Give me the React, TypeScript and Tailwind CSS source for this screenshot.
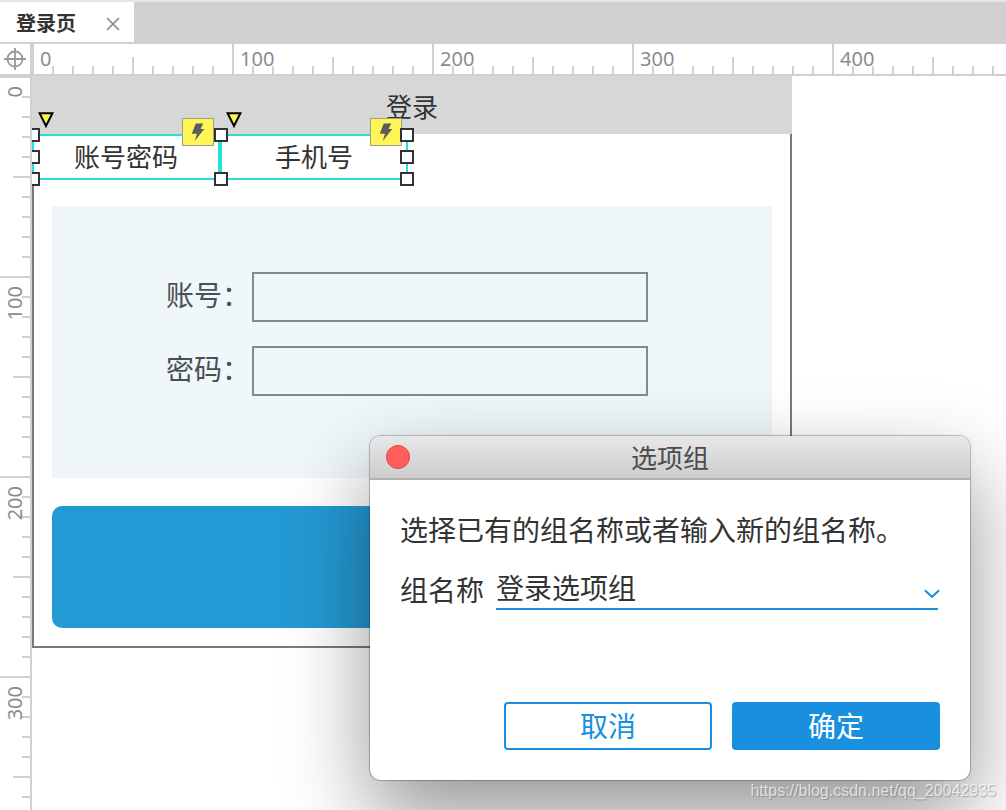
import { useState } from "react";

const columnMarks = [0, 100, 200, 300, 400];
const rowMarks = [0, 100, 200, 300];
const steps = [1, 2, 3, 4, 5, 6, 7, 8, 9];

function HorizontalRuler() {
  return (
    <div className="flex h-8 min-w-0 flex-1 overflow-hidden border-b-2 border-[#d0d0d0] bg-white">
      {columnMarks.map((mark) => (
        <div key={mark} className="relative w-[200px] shrink-0 pt-0.5 pl-2 text-xl leading-[26px] text-[#8c8c8c]">
          <svg className="absolute inset-0 h-[30px] w-[200px]" viewBox="0 0 200 30" fill="#d0d0d0" aria-hidden="true">
            <rect x="0" y="0" width="2" height="30" />
            {steps.map((s) => (
              <rect key={s} x={s * 20} y={s === 5 ? 13 : 22} width="2" height={s === 5 ? 17 : 8} />
            ))}
          </svg>
          <span className="relative">{mark}</span>
        </div>
      ))}
    </div>
  );
}

function VerticalRuler() {
  return (
    <div className="relative w-8 shrink-0 overflow-hidden border-r-2 border-[#d0d0d0] bg-white">
      <div className="absolute inset-x-0 top-0">
        {rowMarks.map((mark) => (
          <div key={mark} className="relative flex h-[200px] items-start pt-2.5 text-xl leading-[26px] text-[#8c8c8c]">
            <svg className="absolute inset-0 h-[200px] w-[30px]" viewBox="0 0 30 200" fill="#d0d0d0" aria-hidden="true">
              <rect x="0" y="0" width="30" height="2" />
              {steps.map((s) => (
                <rect key={s} x={s === 5 ? 13 : 22} y={s * 20} width={s === 5 ? 17 : 8} height="2" />
              ))}
            </svg>
            <span className="relative ml-0.5 rotate-180 [writing-mode:vertical-rl]">{mark}</span>
          </div>
        ))}
      </div>
    </div>
  );
}

function Handle({ place }: { place: string }) {
  return <span className={`absolute z-10 size-3.5 border-2 border-[#333] bg-white ${place}`} />;
}

function OptionTab({ label, first }: { label: string; first?: boolean }) {
  return (
    <div className="relative flex h-[46px] w-[188px] items-center justify-center border-2 border-[#26e0dc] bg-white text-[26px] text-[#333]">
      {label}
      <svg className="absolute -top-6 left-1 h-[18px] w-[18px]" viewBox="0 0 18 18" aria-hidden="true">
        <path d="M1.6 1.3H14.4L8 14Z" fill="#fff34f" stroke="#000" strokeWidth="2" />
      </svg>
      <span className="absolute -top-[18px] right-1 flex h-7 w-8 items-center justify-center border border-[#a09f83] bg-[#fff556]">
        <svg className="h-5 w-3.5" viewBox="0 0 14 20" aria-hidden="true">
          <path d="M4.7 1.5H12.3L9.5 7H13.3L3.7 19L6 11.8H0.8Z" fill="#5c5c5c" />
        </svg>
      </span>
      {first && (
        <>
          <Handle place="-top-2 -left-2" />
          <Handle place="top-3.5 -left-2" />
          <Handle place="-bottom-2 -left-2" />
        </>
      )}
      {!first && <Handle place="top-3.5 -right-2" />}
      <Handle place={first ? "-top-2 -right-2.5" : "-top-2 -right-2"} />
      <Handle place={first ? "-bottom-2 -right-2.5" : "-bottom-2 -right-2"} />
    </div>
  );
}

function Field({ id, label, type }: { id: string; label: string; type: string }) {
  return (
    <div className="flex items-start">
      <label htmlFor={id} className="w-[86px] text-[28px] leading-[46px] text-[#485154]">
        {label}
      </label>
      <input id={id} type={type} className="h-[50px] w-[396px] border-2 border-[#828a8d] bg-transparent px-3 text-2xl outline-none" />
    </div>
  );
}

function GroupDialog() {
  const [name, setName] = useState("登录选项组");
  return (
    <section
      role="dialog"
      aria-labelledby="dialog-title"
      className="absolute top-[436px] left-[370px] z-20 w-[600px] overflow-hidden rounded-[11px] bg-white text-[28px] text-[#333] shadow-[0_0_1px_1px_rgba(0,0,0,0.25),0_36px_84px_rgba(0,0,0,0.42)]"
    >
      <header className="relative flex h-11 items-center justify-center border-b-2 border-[#b1b1b1] bg-linear-to-b from-[#e8e8e8] to-[#cdcdcd]">
        <button type="button" aria-label="关闭" className="absolute left-4 size-6 rounded-full border border-[#e2463f] bg-[#ff5f5a]" />
        <h1 id="dialog-title" className="pt-0.5 text-[26px] leading-10 text-[#4b4b4b]">选项组</h1>
      </header>
      <div className="p-[30px]">
        <p className="leading-10">选择已有的组名称或者输入新的组名称。</p>
        <div className="mt-4 flex items-end gap-3">
          <label htmlFor="group-name" className="shrink-0 leading-10">组名称</label>
          <div className="relative mr-0.5 flex h-11 min-w-0 flex-1 items-end border-b-2 border-[#1890df]">
            <input
              id="group-name"
              value={name}
              onChange={(e) => setName(e.target.value)}
              className="h-10 min-w-0 flex-1 bg-transparent leading-10 outline-none"
            />
            <button type="button" aria-label="展开" className="-mr-0.5 flex h-7 w-5 items-center justify-end">
              <svg className="h-3 w-4" viewBox="0 0 16 12" fill="none" stroke="#1890df" strokeWidth="2" aria-hidden="true">
                <path d="M0.8 2.2L8 8.8L15.2 2.2" />
              </svg>
            </button>
          </div>
        </div>
        <div className="mt-[92px] flex justify-end gap-5">
          <button type="button" className="flex h-12 w-52 items-center justify-center rounded border-2 border-[#1890df] text-[#1890df]">取消</button>
          <button type="button" className="flex h-12 w-52 items-center justify-center rounded bg-[#1890df] text-white">确定</button>
        </div>
      </div>
    </section>
  );
}

export default function App() {
  return (
    <main className="relative flex h-screen flex-col overflow-hidden bg-white font-['Noto_Sans','Noto_Sans_CJK_SC',sans-serif]">
      <nav className="flex h-11 shrink-0 border-t-2 border-b-2 border-t-[#e6e6e6] border-b-[#d0d0d0] bg-[#d0d0d0]">
        <div className="flex w-[134px] items-center justify-between bg-white pt-1 pr-3 pl-4">
          <a href="#page" className="text-xl font-bold text-[#333]">登录页</a>
          <button type="button" aria-label="关闭标签" className="flex size-[18px] items-center justify-center">
            <svg className="size-3.5" viewBox="0 0 14 14" stroke="#8a8a8a" strokeWidth="1.7" aria-hidden="true">
              <path d="M1 1L13 13M13 1L1 13" />
            </svg>
          </button>
        </div>
      </nav>
      <div className="flex shrink-0">
        <div className="flex h-[34px] w-8 shrink-0 items-center justify-center border-r-2 border-b-4 border-[#d0d0d0] -mb-0.5 relative z-10">
          <svg className="size-[22px]" viewBox="0 0 22 22" fill="none" stroke="#999" strokeWidth="1.8" aria-hidden="true">
            <circle cx="11" cy="11" r="7.5" />
            <path d="M11 0V22M0 11H22" />
          </svg>
        </div>
        <HorizontalRuler />
      </div>
      <div className="flex min-h-0 flex-1">
        <VerticalRuler />
        <div id="page" className="min-w-0 flex-1 overflow-hidden">
          <div className="w-[760px]">
            <h2 className="h-[58px] bg-[#d7d7d7] pt-3 text-center text-[26px] leading-[38px] text-[#333]">登录</h2>
            <div className="border-2 border-t-0 border-[#797979]">
              <div className="-ml-0.5 flex">
                <OptionTab label="账号密码" first />
                <OptionTab label="手机号" />
              </div>
              <form className="px-[18px] pt-[26px] pb-[18px]">
                <div className="flex h-[272px] flex-col gap-6 bg-[#eff7fa] pt-[66px] pl-[114px]">
                  <Field id="account" label="账号：" type="text" />
                  <Field id="password" label="密码：" type="password" />
                </div>
                <button type="button" aria-label="登录" className="mt-7 block h-[122px] w-full rounded-[10px] bg-[#249ad4]" />
              </form>
            </div>
          </div>
        </div>
      </div>
      <GroupDialog />
      <p className="absolute right-2.5 bottom-2 z-30 font-['Liberation_Sans',sans-serif] text-base leading-[22px] text-white/70 [text-shadow:1px_1px_1px_rgba(0,0,0,0.25)]">
        https://blog.csdn.net/qq_20042935
      </p>
    </main>
  );
}
